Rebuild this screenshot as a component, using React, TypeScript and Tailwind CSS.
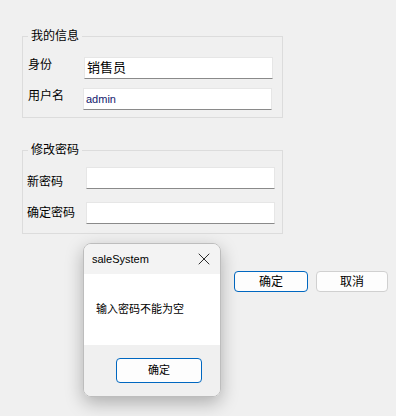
import { X } from "lucide-react";

const font = "font-['Liberation_Sans','Noto_Sans_CJK_SC',sans-serif]";

function Edit({ value, className = "" }: { value?: string; className?: string }) {
  return (
    <div
      className={`flex h-[22px] w-[189px] items-center border border-[#e6e6e6] border-b-[#8a8a8a] bg-white px-[2px] ${className}`}
    >
      {value}
    </div>
  );
}

export default function App() {
  return (
    <div className={`relative h-[416px] w-[396px] overflow-hidden bg-[#f0f0f0] text-[12px] text-black ${font}`}>
      <div className="flex flex-col pl-[22px] pt-[28px]">
        <fieldset className="w-[261px] border border-[#dcdcdc]">
          <legend className="ml-[5px] px-[3px] leading-[16px]">我的信息</legend>
          <div className="flex flex-col gap-[9px] pl-[5px] pt-[13px] pb-[7px]">
            <div className="flex items-start">
              <span className="w-[56px] leading-[16px]">身份</span>
              <Edit value="销售员" className="text-[13px]" />
            </div>
            <div className="flex items-start">
              <span className="w-[55px] leading-[16px]">用户名</span>
              <Edit value="admin" className="text-[11px] text-[#12206e]" />
            </div>
          </div>
        </fieldset>

        <fieldset className="mt-[24px] w-[261px] border border-[#dcdcdc]">
          <legend className="ml-[5px] px-[3px] leading-[16px]">修改密码</legend>
          <div className="flex flex-col gap-[12px] pl-[4px] pt-[9px] pb-[9px]">
            <div className="flex items-start">
              <span className="mt-[7px] w-[59px] leading-[16px]">新密码</span>
              <Edit />
            </div>
            <div className="flex items-center">
              <span className="w-[59px] leading-[16px]">确定密码</span>
              <Edit />
            </div>
          </div>
        </fieldset>

        <div className="mt-[37px] flex gap-[8px] pl-[212px]">
          <button className="h-[21px] w-[74px] rounded-[4px] border-[1.5px] border-[#0067c0] bg-[#fdfdfd] text-[12px]">
            确定
          </button>
          <button className="h-[21px] w-[72px] rounded-[4px] border border-[#d0d0d0] bg-[#fdfdfd] text-[12px]">
            取消
          </button>
        </div>
      </div>

      <div className="absolute left-[83px] top-[243px] flex h-[154px] w-[138px] flex-col overflow-hidden rounded-[8px] border border-[#bdbdbd] shadow-[0_6px_18px_rgba(0,0,0,0.28)]">
        <div className="flex h-[30px] items-center justify-between bg-[#f3f3f3] pl-[8px] pr-[6px]">
          <span className="text-[11px]">saleSystem</span>
          <X size={20} strokeWidth={1.1} className="text-[#1a1a1a]" />
        </div>
        <div className="flex h-[71px] items-center bg-white pl-[12px] text-[11px]">输入密码不能为空</div>
        <div className="flex flex-1 items-center bg-[#f0f0f0] pl-[32px]">
          <button className="h-[25px] w-[86px] rounded-[4px] border-[1.5px] border-[#0067c0] bg-[#fdfdfd] text-[11px]">
            确定
          </button>
        </div>
      </div>
    </div>
  );
}
